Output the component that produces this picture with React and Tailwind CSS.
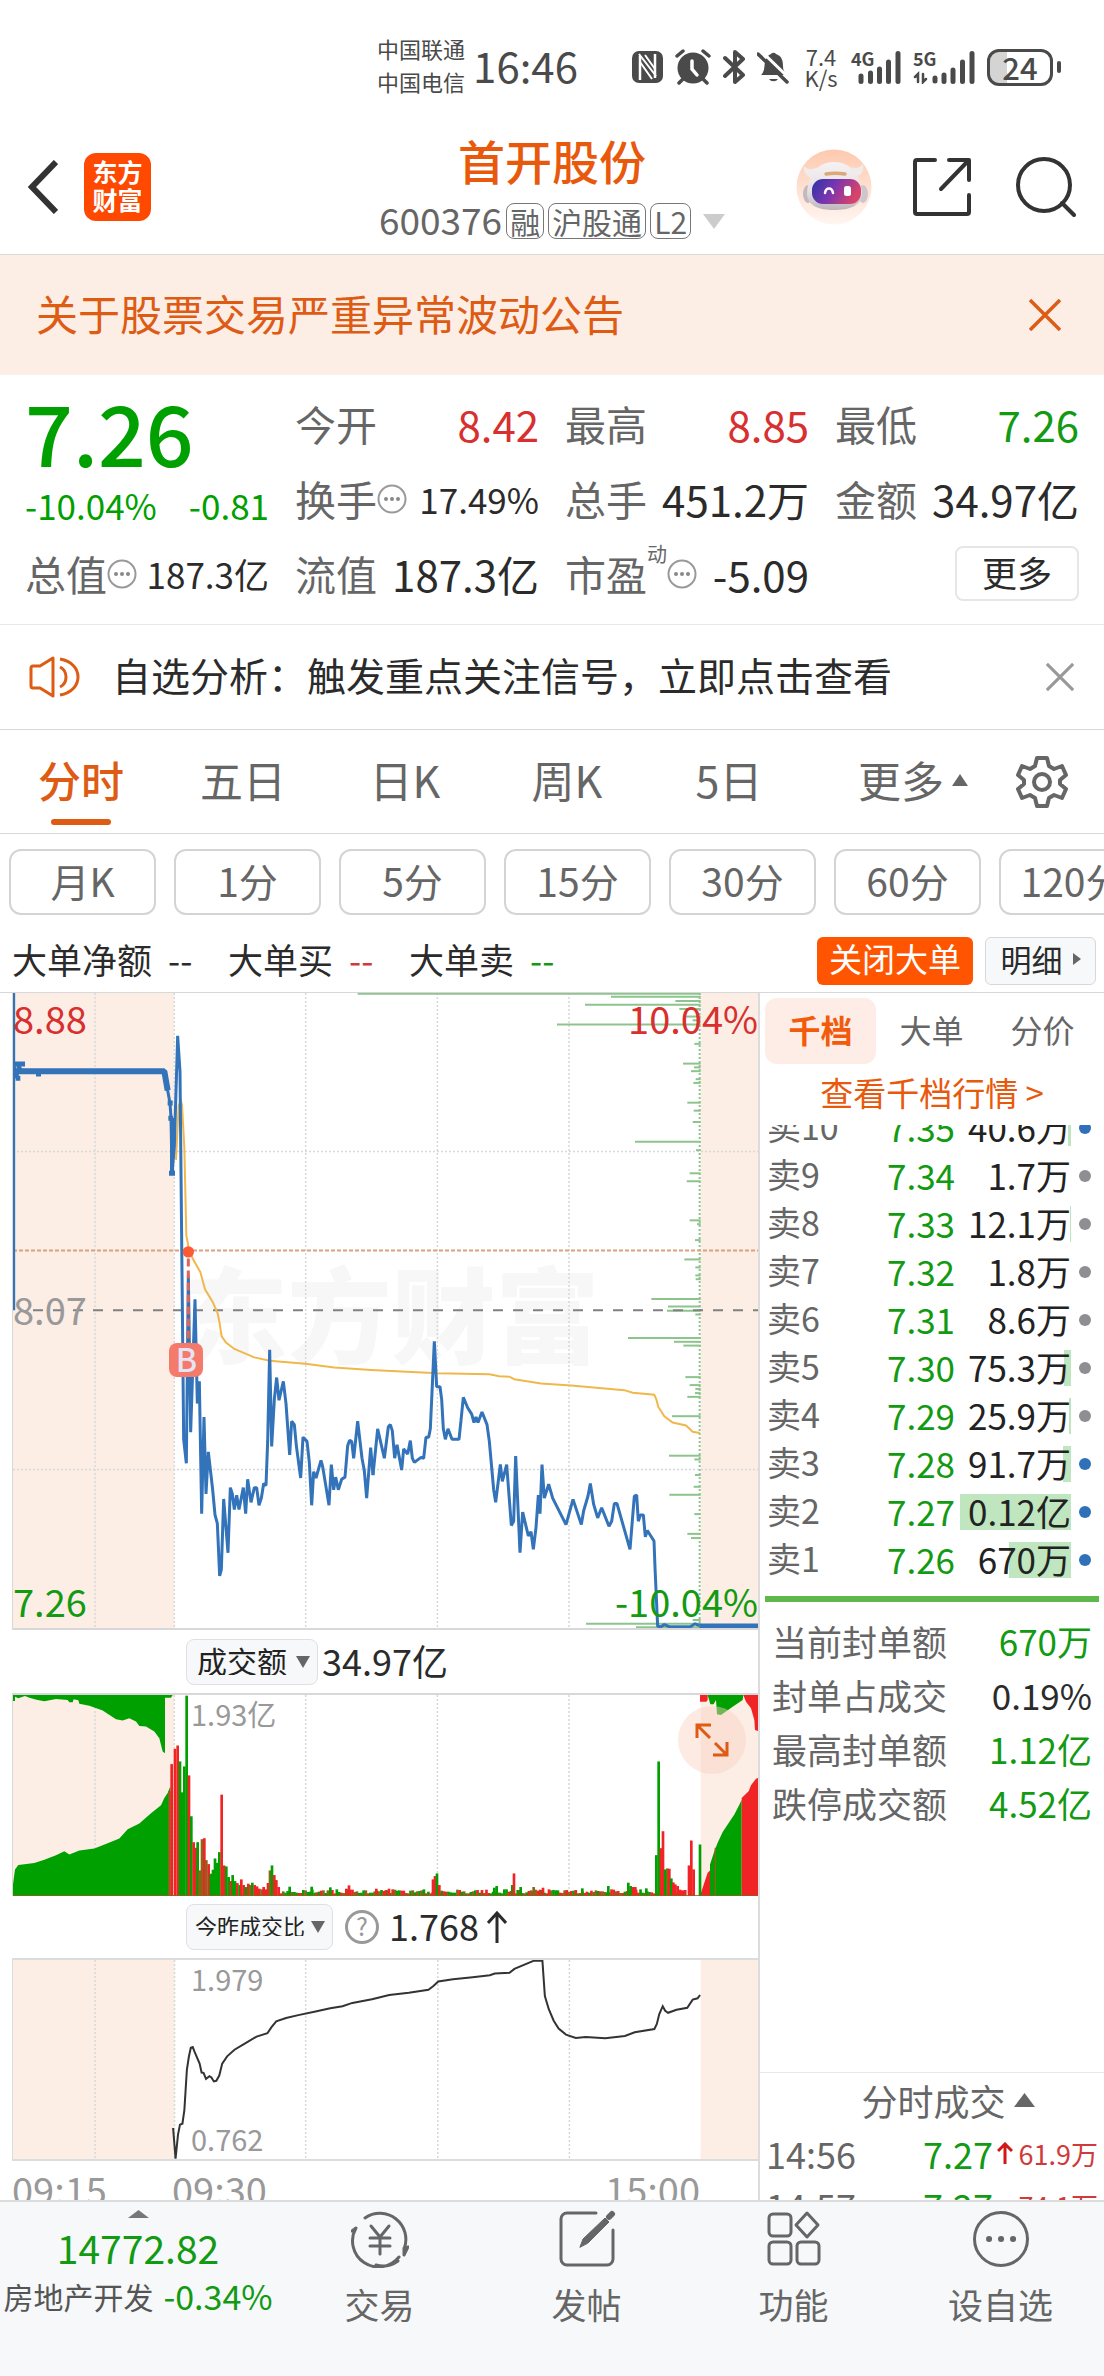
import { useState } from 'react';

const TABS = ['分时', '五日', '日K', '周K', '5日'];
const PERIODS = ['月K', '1分', '5分', '15分', '30分', '60分', '120分'];

const ASKS = [
    { level: '卖10', price: '7.35', qty: '40.6万', bar: 3, hot: true },
    { level: '卖9', price: '7.34', qty: '1.7万', bar: 0, hot: false },
    { level: '卖8', price: '7.33', qty: '12.1万', bar: 1, hot: false },
    { level: '卖7', price: '7.32', qty: '1.8万', bar: 0, hot: false },
    { level: '卖6', price: '7.31', qty: '8.6万', bar: 0, hot: false },
    { level: '卖5', price: '7.30', qty: '75.3万', bar: 7, hot: false },
    { level: '卖4', price: '7.29', qty: '25.9万', bar: 2, hot: false },
    { level: '卖3', price: '7.28', qty: '91.7万', bar: 8, hot: true },
    { level: '卖2', price: '7.27', qty: '0.12亿', bar: 111, hot: true },
    { level: '卖1', price: '7.26', qty: '670万', bar: 62, hot: true }
];

const LIMIT_STATS = [
    { label: '当前封单额', value: '670万', color: 'text-[#129a12]' },
    { label: '封单占成交', value: '0.19%', color: 'text-[#2b2b2b]' },
    { label: '最高封单额', value: '1.12亿', color: 'text-[#129a12]' },
    { label: '跌停成交额', value: '4.52亿', color: 'text-[#129a12]' }
];

const TRADES = [
    { time: '14:56', price: '7.27', qty: '61.9万', up: true },
    { time: '14:57', price: '7.27', qty: '74.1万', up: false }
];

const AUCTION = '38,788 38,33 38,202 48,236 52,202 62,219 490,219 500,265 507,295 510,330 513,462';

const PRICE =
    '513,462 520,400 530,135 537,220 548,1095 556,1152 562,705 569,1078 582,762 589,1010 595,957 602,1272 609,1042 615,1225 622,1125 635,1215 642,1275 649,1295 656,1420 661,1405 668,1237 681,1365 688,1210 694,1225 700,1262 707,1228 714,1262 727,1210 734,1272 740,1190 750,1245 760,1210 767,1210 774,1252 781,1235 788,1200 795,1205 800,1100 806,882 812,1112 820,1000 827,948 834,1002 847,957 855,1010 866,1132 872,1052 880,1060 886,1110 899,1187 906,1090 918,1100 925,1150 932,1252 938,1172 945,1187 960,1145 965,1160 984,1252 991,1155 998,1215 1004,1185 1012,1215 1022,1190 1032,1185 1040,1110 1046,1097 1052,1100 1058,1140 1070,1052 1083,1140 1090,1170 1097,1235 1109,1115 1116,1180';

const PRICE_PM =
    '6,1180 20,1070 40,1140 52,1065 58,1060 64,1075 71,1140 78,1108 92,1168 98,1118 110,1130 118,1098 124,1140 130,1150 150,1138 158,1140 165,1090 173,1090 178,1070 190,862 197,970 207,970 212,1000 217,1070 223,1095 231,1070 243,1095 264,1095 270,1050 277,995 290,1020 302,1035 309,1055 315,1042 321,1055 333,1030 348,1060 355,1100 368,1215 374,1245 388,1155 394,1195 407,1155 421,1300 428,1290 434,1135 447,1365 455,1268 472,1325 480,1315 487,1357 495,1305 502,1228 507,1272 513,1155 520,1235 533,1202 545,1235 585,1298 606,1238 631,1298 638,1265 651,1230 658,1200 668,1250 680,1282 692,1258 714,1302 722,1290 730,1248 738,1248 777,1357 790,1230 797,1228 802,1290 808,1275 817,1275 823,1327 829,1312 849,1337 852,1400 860,1540 870,1541 880,1536 895,1541 958,1541 972,1534 985,1538';

const AVG =
    '525,430 533,300 540,290 543,300 550,400 556,610 562,635 575,665 598,697 612,738 635,768 650,795 655,815 662,850 675,865 700,880 760,900 806,908 913,915 1000,924 1110,930 1310,938 1465,940 1495,945 1525,946 1540,952 1620,962 1710,967 1870,978 1895,984 1960,989 1966,1000 1972,1018 1990,1040 2015,1055 2055,1062 2075,1077 2097,1080';

// [start x, y] of each price level's turnover, all end on the 15:00 line
const LEVELS = [
    [-40, 35], [720, 42], [913, 52], [642, 61], [925, 71], [938, 89], [965, 98], [558, 108], [970, 154],
    [936, 201], [969, 210], [960, 219], [974, 238], [967, 247], [949, 294], [968, 313], [965, 340],
    [792, 387], [975, 407], [956, 462], [947, 481], [956, 574], [978, 583], [972, 621], [940, 667],
    [973, 686], [973, 705], [974, 714], [841, 761], [891, 779], [888, 789], [973, 798], [771, 854],
    [909, 863], [937, 872], [943, 947], [956, 966], [973, 975], [972, 985], [949, 994], [903, 1040],
    [894, 1134], [970, 1143], [972, 1180], [968, 1208], [895, 1227], [970, 1273], [949, 1320],
    [960, 1330], [965, 1525], [645, 1534], [795, 1542]
];

// [x, top, colour]
const VOLUME = [
    [501, 480, 'm'], [508, 398, 'r'], [518, 352, 'r'], [526, 342, 'r'], [533, 390, 'g'], [540, 483, 'g'], [546, 405, 'g'],
    [553, 192, 'g'], [560, 432, 'r'], [567, 555, 'g'], [574, 633, 'r'], [580, 650, 'r'], [586, 633, 'g'],
    [592, 718, 'm'], [599, 624, 'm'], [606, 621, 'r'], [612, 687, 'm'], [619, 699, 'r'], [625, 728, 'g'],
    [632, 716, 'g'], [638, 682, 'g'], [645, 695, 'g'], [651, 663, 'g'], [658, 490, 'r'], [665, 703, 'r'],
    [672, 706, 'g'], [679, 738, 'g'], [685, 750, 'r'], [691, 732, 'g'], [698, 750, 'g'], [705, 756, 'r'],
    [712, 762, 'g'], [717, 745, 'r'], [724, 762, 'r'], [731, 768, 'g'], [738, 758, 'r'], [744, 762, 'm'],
    [750, 755, 'g'], [757, 762, 'r'], [764, 766, 'r'], [771, 773, 'r'], [778, 775, 'm'], [784, 768, 'r'],
    [790, 775, 'r'], [797, 756, 'r'], [803, 718, 'm'], [809, 703, 'g'], [816, 732, 'r'], [822, 747, 'r'],
    [829, 768, 'r'], [862, 767, 'g'], [928, 767, 'g'], [984, 769, 'g'], [1032, 773, 'r'], [1040, 763, 'r'],
    [1122, 773, 'r'], [1160, 773, 'r'], [1292, 745, 'r'], [1298, 735, 'r'], [1304, 727, 'g'], [1311, 762, 'r'],
    [1476, 770, 'g'], [1483, 765, 'g'], [1530, 762, 'g'], [1535, 727, 'r'], [1555, 768, 'g'], [1594, 768, 'm'],
    [1622, 770, 'r'], [1740, 772, 'g'], [1818, 765, 'g'], [1878, 755, 'g'], [1885, 765, 'g'], [1892, 768, 'r'],
    [1899, 768, 'r'], [1932, 772, 'g'], [1962, 672, 'g'], [1969, 390, 'g'], [1976, 651, 'r'], [1982, 600, 'r'],
    [1989, 715, 'g'], [1995, 712, 'm'], [2001, 713, 'r'], [2007, 742, 'g'], [2013, 754, 'r'], [2019, 760, 'r'],
    [2026, 765, 'r'], [2033, 776, 'r'], [2040, 778, 'r'], [2047, 780, 'r'], [2060, 703, 'r'], [2067, 628, 'r'],
    [2074, 715, 'r'], [2093, 640, 'g']
];

// quiet minutes between the peaks
const FLAT = Array.from({ length: 182 }, (_, i) => {
    const n = (i * 37 + ((i * i) % 23) * 11) % 29;
    return [836 + i * 6.7, 787 - (n % 13), n % 5 < 2 ? 'r' : n % 5 < 4 ? 'g' : 'm'];
});

const FILL = { r: '#f02424', g: '#00a000', m: '#8a6418' };

const RATIO =
    '350,715 355,808 360,735 364,705 369,702 373,660 378,540 382,500 386,472 390,470 394,485 404,520 408,547 412,548 417,566 424,558 428,562 433,574 438,572 444,556 450,520 460,498 475,478 495,460 520,438 542,428 550,410 560,392 580,382 605,373 640,362 670,352 695,346 715,336 755,325 790,312 830,305 870,296 880,285 890,271 920,264 960,258 995,252 1005,247 1035,245 1045,233 1085,208 1102,208 1107,315 1115,355 1125,390 1135,414 1150,432 1170,442 1190,439 1230,443 1270,436 1290,425 1330,415 1335,400 1340,370 1347,346 1352,360 1358,366 1375,357 1397,351 1408,326 1418,322 1423,312';

function Triangle({ className, down }) {
    return (
        <svg viewBox="0 0 10 10" preserveAspectRatio="none" className={className} fill="currentColor" aria-hidden="true">
            <path d={down ? 'M0 0h10L5 10z' : 'M5 0l5 10H0z'} />
        </svg>
    );
}

function MoreDots({ className }) {
    return (
        <svg viewBox="0 0 30 30" className={className} fill="none" stroke="#999" strokeWidth="2" aria-hidden="true">
            <circle cx="15" cy="15" r="13.5" />
            <g fill="#888" stroke="none">
                <circle cx="9" cy="15" r="2" />
                <circle cx="15" cy="15" r="2" />
                <circle cx="21" cy="15" r="2" />
            </g>
        </svg>
    );
}

function Cross({ className }) {
    return (
        <svg viewBox="0 0 32 32" className={className} fill="none" stroke="currentColor" strokeWidth="3.5">
            <path d="M1 1l30 30M31 1L1 31" />
        </svg>
    );
}

function StatusBar() {
    return (
        <div className="flex h-[134px] items-center justify-end pr-[43px] text-[#4a4a4a]">
            <div className="pb-1 text-[22px] leading-[33px]">
                <div>中国联通</div>
                <div>中国电信</div>
            </div>
            <div className="ml-2 pb-1 text-[42px] leading-none">16:46</div>
            <svg viewBox="0 0 31 34" className="ml-[54px] h-[34px] w-[31px]">
                <rect x="0" y="1" width="31" height="32" rx="7" fill="#4a4a4a" />
                <path d="M8 6v24M23 4v24" stroke="#fff" strokeWidth="2.5" />
                <path d="M7 4l17 22M8 12l12 17M13 5l10 14" stroke="#fff" strokeWidth="2" />
            </svg>
            <svg viewBox="0 0 36 36" className="ml-3 h-9 w-9">
                <circle cx="18" cy="19" r="15.5" fill="#4a4a4a" />
                <path d="M2 7l6-5M34 7l-6-5M8 30l-4 4M28 30l4 4" stroke="#4a4a4a" strokeWidth="3.5" strokeLinecap="round" />
                <path d="M17 12v8l5 6" stroke="#fff" strokeWidth="3.5" fill="none" strokeLinecap="round" />
            </svg>
            <svg viewBox="0 0 22 36" className="ml-3 h-9 w-[22px]" fill="none" stroke="#4a4a4a" strokeWidth="4" strokeLinejoin="round" strokeLinecap="round">
                <path d="M2 9l18 17-8 7V3l8 7L2 27" />
            </svg>
            <svg viewBox="0 0 32 36" className="ml-3 h-9 w-8">
                <path d="M4 26c4-4 3-8 4-13 1-4 3-7 6-8a3 3 0 0 1 5 0c6 2 7 7 7 12 0 4 1 6 4 9z" fill="#4a4a4a" />
                <path d="M12 30h9a5 4 0 0 1-9 0z" fill="#4a4a4a" />
                <path d="M3 1l30 29" stroke="#fff" strokeWidth="3" />
                <path d="M1 5l29 28" stroke="#4a4a4a" strokeWidth="3.5" strokeLinecap="round" />
            </svg>
            <div className="ml-3.5 w-9 text-center text-[22px] leading-[21px]">
                <div>7.4</div>
                <div>K/s</div>
            </div>
            <div className="relative ml-3 h-[34px] w-[50px]">
                <span className="absolute left-0 top-0 text-[18px] font-bold leading-[16px]">4G</span>
                <svg viewBox="0 0 50 34" className="h-full w-full" fill="none" stroke="#4a4a4a" strokeWidth="5" strokeLinecap="round">
                    <path d="M10 26v5.5M19.500 23v8.500M28.500 19v12.500M37.500 12v19.500M47 3.500v28" />
                </svg>
            </div>
            <div className="relative ml-3 h-[34px] w-[62px]">
                <span className="absolute left-0 top-0 text-[18px] font-bold leading-[16px]">5G</span>
                <svg viewBox="0 0 62 34" className="h-full w-full" fill="none" stroke="#4a4a4a" strokeLinecap="round">
                    <path d="M22 28v3M31 25v6.500M40 20v11.500M49.500 12v19.500M59 3.500v28" strokeWidth="5" />
                    <path d="M2 27l3-3v8M10 24v8l3-3" strokeWidth="2.5" />
                </svg>
            </div>
            <div className="ml-3 h-[37px] w-[66px] rounded-xl border-[3px] border-[#4a4a4a] bg-linear-to-r from-[#d4d4d4] from-28% to-white to-28% text-center text-[31px] font-medium leading-[29px]">
                24
            </div>
            <div className="ml-1 h-3 w-1 rounded bg-[#4a4a4a]" />
        </div>
    );
}

function RobotIcon() {
    return (
        <svg viewBox="0 0 76 76" className="h-[76px] w-[76px]" aria-label="智能助手">
            <defs>
                <linearGradient id="halo" x1="0" y1="0" x2="0" y2="1">
                    <stop offset="0" stopColor="#fdc9ae" />
                    <stop offset="1" stopColor="#fff6f1" />
                </linearGradient>
                <linearGradient id="visor" x1="0" y1="0" x2="1" y2="0.3">
                    <stop offset="0" stopColor="#2c34a8" />
                    <stop offset="0.5" stopColor="#7a35b0" />
                    <stop offset="1" stopColor="#d8436a" />
                </linearGradient>
                <linearGradient id="shell" x1="0" y1="0" x2="0" y2="1">
                    <stop offset="0" stopColor="#f6f2f3" />
                    <stop offset="0.6" stopColor="#e6e0e3" />
                    <stop offset="1" stopColor="#bdb5ba" />
                </linearGradient>
            </defs>
            <circle cx="38" cy="38" r="37.5" fill="url(#halo)" />
            <ellipse cx="12" cy="45" rx="5" ry="9" fill="#c2b8be" />
            <ellipse cx="67" cy="45" rx="5" ry="9" fill="#cfc6cb" />
            <path d="M17 29c-6-1-10-5-9-12 3 4 8 4 14 1zM60 27c6-1 8-5 7-12-3 4-7 5-12 3z" fill="#f1ebec" />
            <path d="M38 13c16 0 27 13 28 31 0 13-13 17-28 17S11 57 11 44c1-18 11-31 27-31z" fill="url(#shell)" />
            <path d="M30 25c6-1 13-1 19 0" stroke="#dca878" strokeWidth="3.5" fill="none" strokeLinecap="round" />
            <rect x="16" y="30" width="49" height="25" rx="11" fill="url(#visor)" />
            <path d="M29 44c1-6 7-6 8 0" stroke="#fff" strokeWidth="2.5" fill="none" strokeLinecap="round" />
            <rect x="48" y="37" width="7" height="10" rx="2.5" fill="#fff" />
        </svg>
    );
}

function Header() {
    return (
        <header className="grid h-[121px] grid-cols-[1fr_auto_1fr] items-center border-b border-[#d8d8d8] pb-3.5">
            <div className="flex items-center pl-7">
                <button aria-label="返回">
                    <svg viewBox="0 0 30 54" className="h-[54px] w-[30px]" fill="none" stroke="#333" strokeWidth="6">
                        <path d="M28 2L4 27l24 25" />
                    </svg>
                </button>
                <div className="ml-[26px] flex h-[68px] w-[67px] flex-col items-center justify-center rounded-xl bg-[#ff4800] pb-1 text-[25px] font-bold leading-[28px] text-white">
                    <span>东方</span>
                    <span>财富</span>
                </div>
            </div>
            <div className="flex flex-col items-center">
                <h1 className="text-[47px] font-medium leading-[52px] text-[#e8590c]">首开股份</h1>
                <div className="mt-4 flex h-[38px] items-center gap-1 text-[37px] leading-none text-[#666]">
                    <span className="pb-1">600376</span>
                    <span className="rounded-lg border border-[#777] px-[3px] text-[30px] leading-[34px]">融</span>
                    <span className="rounded-lg border border-[#777] px-[3px] text-[30px] leading-[34px]">沪股通</span>
                    <span className="rounded-lg border border-[#777] px-[3px] text-[30px] leading-[34px]">L2</span>
                    <Triangle down className="ml-2 h-[15px] w-[22px] text-[#ccc]" />
                </div>
            </div>
            <div className="flex items-center justify-end pr-7">
                <RobotIcon />
                <button className="ml-[41px]" aria-label="分享">
                    <svg viewBox="0 0 58 58" className="h-[58px] w-[58px]" fill="none" stroke="#333" strokeWidth="4" strokeLinecap="round" strokeLinejoin="round">
                        <path d="M22 2H4a2 2 0 0 0-2 2v50a2 2 0 0 0 2 2h50a2 2 0 0 0 2-2V37M36 2h20v20M55 3L28 31" />
                    </svg>
                </button>
                <button className="ml-[45px]" aria-label="搜索">
                    <svg viewBox="0 0 60 60" className="h-[60px] w-[60px]" fill="none" stroke="#333" strokeWidth="4" strokeLinecap="round">
                        <circle cx="28" cy="28" r="26" />
                        <path d="M46 46l12 12" />
                    </svg>
                </button>
            </div>
        </header>
    );
}

function Quote({ label, value, dots, small, sup, color = 'text-[#2b2b2b]' }) {
    return (
        <div className="flex h-[75px] items-center justify-between whitespace-nowrap pb-1">
            <span className="flex items-center text-[41px] leading-none text-[#666]">
                {label}
                {sup && <sup className="mb-5 text-[20px] leading-none">{sup}</sup>}
                {dots && <MoreDots className="h-[30px] w-[30px]" />}
            </span>
            <span className={small ? `text-[35px] leading-none ${color}` : `text-[42px] leading-none ${color}`}>{value}</span>
        </div>
    );
}

function QuotePanel() {
    return (
        <section className="border-b border-[#e8e8e8] pb-[11px] pt-[13px]">
            <div className="grid grid-cols-4 gap-x-[26px] px-[25px]">
                <div className="row-span-2 flex flex-col justify-between pb-4 text-[#00a000]">
                    <div className="text-[84px] font-medium leading-[86px]">7.26</div>
                    <div className="flex justify-between text-[35px] leading-none">
                        <span>-10.04%</span>
                        <span>-0.81</span>
                    </div>
                </div>
                <Quote label="今开" value="8.42" color="text-[#d82f2f]" />
                <Quote label="最高" value="8.85" color="text-[#d82f2f]" />
                <Quote label="最低" value="7.26" color="text-[#129a12]" />
                <Quote label="换手" value="17.49%" dots small />
                <Quote label="总手" value="451.2万" />
                <Quote label="金额" value="34.97亿" />
                <Quote label="总值" value="187.3亿" dots small />
                <Quote label="流值" value="187.3亿" />
                <Quote label="市盈" value="-5.09" sup="动" dots />
                <div className="flex h-[75px] items-center justify-end pb-1">
                    <button className="h-[55px] w-[124px] rounded-lg border-2 border-[#e6e6e6] pb-1 text-[35px] leading-none text-[#2b2b2b]">
                        更多
                    </button>
                </div>
            </div>
        </section>
    );
}

function Grid({ xs, y1, y2, children }) {
    return (
        <g stroke="#d8d8d8" strokeWidth="1.5" strokeDasharray="2 2">
            {xs.map(x => (
                <path key={x} d={`M${x} ${y1}V${y2}`} vectorEffect="non-scaling-stroke" />
            ))}
            {children}
        </g>
    );
}

function PriceChart() {
    return (
        <div className="relative h-[637px] border-b-2 border-l border-[#d8d8d8] text-[38px] leading-none">
            <div className="absolute inset-0 flex items-center justify-center pl-3 text-[104px] font-black text-[#f7f7f7]">东方财富</div>
            <svg viewBox="36 33 2235 1511" preserveAspectRatio="none" className="absolute inset-0 h-full w-full" fill="none">
                <path d="M36 33H520V1544H36zM2099 33H2271V1544H2099z" fill="#fcede5" />
                <Grid xs={[282, 520, 914, 1309, 1704]} y1={33} y2={1544}>
                    <path d="M36 410H2271M36 1167H2271" vectorEffect="non-scaling-stroke" />
                </Grid>
                <g stroke="#8dc48d" strokeWidth="2">
                    {LEVELS.map(([x, y]) => (
                        <path key={y} d={`M${x + 1110} ${y}H2099`} vectorEffect="non-scaling-stroke" />
                    ))}
                    <path d="M2096 33V1544" strokeDasharray="2 2" vectorEffect="non-scaling-stroke" />
                </g>
                <path d="M36 646H2271" stroke="#d9a27e" strokeWidth="2" strokeDasharray="4 2" vectorEffect="non-scaling-stroke" />
                <path d="M96 788H2271" stroke="#808080" strokeWidth="2" strokeDasharray="10 10" vectorEffect="non-scaling-stroke" />
                <polyline points={AVG} stroke="#f0b84c" strokeWidth="2" vectorEffect="non-scaling-stroke" />
                <g stroke="#3373b9" strokeWidth="3" strokeLinejoin="bevel">
                    <polyline points={AUCTION} vectorEffect="non-scaling-stroke" />
                    <path d="M50 219H490L500 265" strokeWidth="6" vectorEffect="non-scaling-stroke" />
                    <path d="M36 202H72M44 236H58M105 226H120M500 295H515M502 331H516M504 462H522" strokeWidth="5" vectorEffect="non-scaling-stroke" />
                    <path d="M513 330V465" strokeWidth="4" vectorEffect="non-scaling-stroke" />
                    <polyline points={PRICE} vectorEffect="non-scaling-stroke" />
                    <g transform="translate(1110 0)">
                        <polyline points={PRICE_PM} vectorEffect="non-scaling-stroke" />
                        <path d="M985 1539H1161" strokeWidth="5" vectorEffect="non-scaling-stroke" />
                    </g>
                </g>
                <path d="M562 665V870" stroke="#e0645a" strokeWidth="3" strokeDasharray="8 4" vectorEffect="non-scaling-stroke" />
                <ellipse cx="562" cy="649" rx="17" ry="13.5" fill="#ff5a36" />
            </svg>
            <span className="absolute left-0 top-1.5 text-[#d82f2f]">8.88</span>
            <span className="absolute right-0 top-1.5 text-[#d82f2f]">10.04%</span>
            <span className="absolute left-0 top-[297px] text-[#999]">8.07</span>
            <span className="absolute bottom-2 left-0 text-[#129a12]">7.26</span>
            <span className="absolute bottom-2 right-0 text-[#129a12]">-10.04%</span>
            <span className="absolute left-[21%] top-[350px] h-[34px] w-[34px] rounded-lg bg-[#f47a6c] text-center text-[32px] font-medium leading-[30px] text-[#e6e3f5]">
                B
            </span>
        </div>
    );
}

function VolumeChart() {
    return (
        <div className="relative h-[203px] border-t-2 border-l border-[#d8d8d8]">
            <svg viewBox="36 190 2235 605" preserveAspectRatio="none" className="absolute inset-0 h-full w-full">
                <path d="M36 190H520V795H36zM2099 190H2271V795H2099z" fill="#fcede5" />
                <Grid xs={[282, 520, 914, 1309, 1704]} y1={190} y2={795} />
                <g fill="#00a000">
                    <path d="M36 795V760L42 715L52 702L100 696L130 686L165 672L190 660L205 670L235 658L280 652L320 636L355 622L380 594L415 577L450 546L480 522L490 500L500 485L508 465V795z" />
                    <path d="M36 190V208H42V195L52 200L72 193L85 198L110 205L130 209L165 202L200 205L205 212H215L218 203L232 206L235 216L265 222L305 237L345 263L365 267L385 260L405 270L415 283L435 285L460 300L475 320L485 360L492 365V198H510L515 190z" />
                    <path d="M2127 795V700L2140 660L2150 635L2165 602L2180 580L2200 550L2215 520L2222 505V795z" />
                    <path d="M2120 190L2128 218H2138L2145 205L2148 248L2160 250L2195 225L2225 205L2227 190z" />
                </g>
                <g fill="#f02424">
                    <path d="M2100 795V785L2110 755L2120 725L2127 718V795zM2222 795V500L2235 487L2243 480L2250 462L2265 442L2271 440V795z" />
                    <path d="M2097 190H2120V205L2116 210H2097zM2227 190L2235 210L2250 230L2260 265L2262 295L2271 298V190z" />
                </g>
                {[...FLAT, ...VOLUME].map(([x, y, c], i) => (
                    <rect key={i} x={x} y={y} width="8" height={795 - y} fill={FILL[c]} />
                ))}
                <path d="M2143 795V650" stroke={FILL.m} strokeWidth="4" />
                <path d="M36 794H2271" stroke="#8a6418" strokeWidth="3" />
            </svg>
            <span className="absolute left-[178px] top-1 text-[29px] leading-none text-[#999]">1.93亿</span>
            <button
                className="absolute right-3 top-[11px] flex h-[68px] w-[68px] items-center justify-center rounded-full bg-[#fbd3c0]/45"
                aria-label="全屏"
            >
                <svg viewBox="0 0 34 34" className="h-[34px] w-[34px]" fill="none" stroke="#de5b14" strokeWidth="3">
                    <path d="M2 15V2h14M2 2l13 13M32 19v13H18M32 32L20 20" />
                </svg>
            </button>
        </div>
    );
}

function RatioChart() {
    return (
        <div className="relative h-[203px] border-y-2 border-l border-[#dcdcdc] text-[29px] leading-none text-[#999]">
            <svg viewBox="24 206 1517 603" preserveAspectRatio="none" className="absolute inset-0 h-full w-full" fill="none">
                <path d="M24 206H353V809H24zM1424 206H1541V809H1424z" fill="#fcede5" />
                <Grid xs={[191, 353, 620, 889, 1157]} y1={206} y2={809} />
                <polyline points={RATIO} stroke="#333" strokeWidth="2" vectorEffect="non-scaling-stroke" />
            </svg>
            <span className="absolute left-[178px] top-1">1.979</span>
            <span className="absolute bottom-1.5 left-[178px]">0.762</span>
        </div>
    );
}

function Charts() {
    return (
        <div className="min-w-0 flex-1 pl-3">
            <PriceChart />
            <div className="flex h-[63px] items-center pl-[174px]">
                <div className="relative h-[46px] w-[132px]">
                    <select
                        aria-label="副图指标一"
                        className="h-full w-full appearance-none rounded-lg border border-[#e0e0e4] bg-[#f6f8fa] pb-1 pl-2.5 text-[30px] leading-none text-[#222]"
                    >
                        <option>成交额</option>
                    </select>
                    <Triangle down className="pointer-events-none absolute right-2 top-[17px] h-3 w-[14px] text-[#666]" />
                </div>
                <span className="ml-1 pb-1 text-[36px] leading-none text-[#2b2b2b]">34.97亿</span>
            </div>
            <VolumeChart />
            <div className="flex h-[62px] items-center pl-[174px]">
                <div className="relative h-[46px] w-[147px]">
                    <select
                        aria-label="副图指标二"
                        className="h-full w-full appearance-none rounded-lg border border-[#e0e0e4] bg-[#f6f8fa] pb-1 pl-2 text-[22px] leading-none text-[#222]"
                    >
                        <option>今昨成交比</option>
                    </select>
                    <Triangle down className="pointer-events-none absolute right-2 top-[17px] h-3 w-[14px] text-[#666]" />
                </div>
                <span className="ml-3 flex h-[34px] w-[34px] items-center justify-center rounded-full border-[3px] border-[#999] pb-1 text-[25px] leading-none text-[#999]">
                    ?
                </span>
                <span className="ml-2.5 pb-1 text-[36px] leading-none text-[#2b2b2b]">1.768</span>
                <svg viewBox="0 0 20 32" className="ml-2 h-8 w-5" fill="none" stroke="#2b2b2b" strokeWidth="3">
                    <path d="M10 32V2M1 12l9-10 9 10" />
                </svg>
            </div>
            <RatioChart />
            <div className="flex h-[39px] items-start overflow-hidden pt-2 text-[38px] leading-[40px] text-[#999]">
                <span className="w-[160px]">09:15</span>
                <span>09:30</span>
                <span className="ml-auto mr-[58px]">15:00</span>
            </div>
        </div>
    );
}

function OrderBook() {
    return (
        <aside className="flex w-[346px] shrink-0 flex-col border-l-2 border-[#dcdcdc]">
            <div className="mt-[5px] flex h-[66px] px-[5px] text-[32px] leading-none text-[#666]">
                <button className="w-[111px] rounded-xl bg-[#fdede6] pb-1 font-bold text-[#f25a0c]">千档</button>
                <button className="w-[111px] pb-1">大单</button>
                <button className="w-[111px] pb-1">分价</button>
            </div>
            <a href="#depth" className="mt-3 text-center text-[33px] leading-[33px] text-[#e8590c]">
                查看千档行情 &gt;
            </a>
            <div className="mt-4 flex h-[459px] flex-col justify-end overflow-hidden">
                <table className="w-full table-fixed whitespace-nowrap text-[35px] leading-none">
                    <tbody>
                        {ASKS.map(a => (
                            <tr key={a.level} className="h-12">
                                <td className="w-[100px] p-0 pb-1 pl-[7px] text-[34px] text-[#666]">{a.level}</td>
                                <td className="w-[95px] p-0 pb-1 text-right text-[#129a12]">{a.price}</td>
                                <td className="relative p-0 pb-1 text-right text-[#222]">
                                    <span className="absolute right-0 top-1.5 h-9 bg-[#bfe6bf]" style={{ width: a.bar }} />
                                    <span className="relative">{a.qty}</span>
                                </td>
                                <td className="w-[33px] p-0 pl-2">
                                    <span className={a.hot ? 'block h-3 w-3 rounded-full bg-[#3070b8]' : 'block h-3 w-3 rounded-full bg-[#8e8e93]'} />
                                </td>
                            </tr>
                        ))}
                    </tbody>
                </table>
            </div>
            <div className="mx-[5px] mt-3 h-1.5 bg-[#5eb84a]" />
            <dl className="mt-3 pl-3 pr-3 text-[35px] leading-[54px]">
                {LIMIT_STATS.map(s => (
                    <div key={s.label} className="flex justify-between">
                        <dt className="text-[#666]">{s.label}</dt>
                        <dd className={s.color}>{s.value}</dd>
                    </div>
                ))}
            </dl>
            <div className="mt-auto h-[128px] overflow-hidden border-t border-[#e8e8e8]">
                <button className="flex h-[54px] w-full items-center justify-center gap-2 pl-8 text-[36px] leading-none text-[#666]">
                    分时成交
                    <Triangle className="h-3.5 w-[21px]" />
                </button>
                <table className="w-full whitespace-nowrap text-[36px] leading-none">
                    <tbody>
                        {TRADES.map(t => (
                            <tr key={t.time} className="h-[52px]">
                                <td className="p-0 pl-1.5 text-[#666]">{t.time}</td>
                                <td className="p-0 text-right text-[#129a12]">{t.price}</td>
                                <td className="w-5 p-0">
                                    {t.up && (
                                        <svg viewBox="0 0 16 22" className="ml-1 h-[22px] w-4" fill="none" stroke="#d01818" strokeWidth="3">
                                            <path d="M8 22V2M1 9l7-7 7 7" />
                                        </svg>
                                    )}
                                </td>
                                <td className="w-[91px] p-0 pr-1.5 text-right text-[27px] text-[#d03a3a]">{t.qty}</td>
                            </tr>
                        ))}
                    </tbody>
                </table>
            </div>
        </aside>
    );
}

const NAV = [
    {
        label: '交易',
        icon: (
            <>
                <path d="M14 8A26 26 0 0 1 53 39l4-2M48 47A26 26 0 0 1 5 18l-4 3M57 37l-4 8v-7M47 51A26 26 0 0 1 25 55" />
                <path d="M20 16l9 11 9-11M19 28h20M19 36h20M29 27v17" />
            </>
        )
    },
    {
        label: '发帖',
        icon: (
            <>
                <path d="M38 3H9a6 6 0 0 0-6 6v40a6 6 0 0 0 6 6h40a6 6 0 0 0 6-6V20" />
                <path d="M22 37l3-8L47 8l4 4-21 21z" fill="#666" strokeWidth="1" />
                <path d="M51 7l3-3" strokeWidth="6" />
            </>
        )
    },
    {
        label: '功能',
        icon: (
            <>
                <rect x="4" y="4" width="22" height="22" rx="4" />
                <rect x="4" y="32" width="22" height="22" rx="4" />
                <rect x="32" y="32" width="22" height="22" rx="4" />
                <path d="M42 3l11 12-11 12-11-12z" />
            </>
        )
    },
    {
        label: '设自选',
        icon: (
            <>
                <circle cx="29" cy="29" r="26.5" />
                <path d="M17 29h.1M29 29h.1M41 29h.1" strokeWidth="6" />
            </>
        )
    }
];

function BottomNav() {
    return (
        <nav className="flex h-[176px] border-t-2 border-[#dcdcdc] bg-[#f6f8fa]">
            <button className="flex w-[276px] flex-col items-center pt-2">
                <Triangle className="h-2 w-[21px] text-[#777]" />
                <span className="mt-2.5 text-[39px] leading-[38px] text-[#129a12]">14772.82</span>
                <span className="mt-2.5 flex items-center gap-2.5 whitespace-nowrap text-[30px] leading-[40px] text-[#555]">
                    房地产开发 <span className="text-[34px] text-[#129a12]">-0.34%</span>
                </span>
            </button>
            {NAV.map(n => (
                <button key={n.label} className="flex flex-1 flex-col items-center pt-2">
                    <svg viewBox="0 0 58 58" className="h-[58px] w-[58px]" fill="none" stroke="#666" strokeWidth="3" strokeLinecap="round" strokeLinejoin="round">
                        {n.icon}
                    </svg>
                    <span className="mt-4 text-[35px] leading-[40px] text-[#666]">{n.label}</span>
                </button>
            ))}
        </nav>
    );
}

export default function App() {
    const [tab, setTab] = useState('分时');
    return (
        <div className="flex min-h-screen flex-col overflow-hidden bg-white font-['Noto_Sans_CJK_SC',sans-serif]">
            <StatusBar />
            <Header />
            <div className="flex h-[120px] items-center justify-between bg-[#fcede5] pl-9 pr-[43px] text-[#de5b14]">
                <a href="#notice" className="pb-1 text-[42px] leading-none">
                    关于股票交易严重异常波动公告
                </a>
                <button aria-label="关闭公告">
                    <Cross className="h-8 w-8" />
                </button>
            </div>
            <QuotePanel />
            <div className="flex h-[105px] items-center border-b border-[#d8d8d8] pl-[29px] pr-[30px]">
                <svg viewBox="0 0 52 42" className="h-[42px] w-[52px]" fill="none" stroke="#de5b14" strokeWidth="3" strokeLinejoin="round">
                    <path d="M2 12q0-2 2-2h7L24 2v38L11 32H4q-2 0-2-2zM31 11c8 4 8 16 0 20M31 3c24 4 24 32 0 36" />
                </svg>
                <span className="ml-[31px] pb-1.5 text-[39px] leading-none text-[#2b2b2b]">自选分析：触发重点关注信号，立即点击查看</span>
                <button className="ml-auto text-[#999]" aria-label="关闭提示">
                    <Cross className="h-7 w-7" />
                </button>
            </div>
            <div className="flex h-[104px] items-center border-b border-[#d8d8d8] text-[43px] leading-none text-[#666]">
                {TABS.map(t => (
                    <button key={t} onClick={() => setTab(t)} className="relative h-full flex-1 pb-1">
                        <span className={t === tab ? 'font-medium text-[#de5b14]' : ''}>{t}</span>
                        {t === tab && <span className="absolute bottom-2 left-1/2 -ml-[30px] h-1.5 w-[60px] rounded bg-[#de5b14]" />}
                    </button>
                ))}
                <button className="flex h-full w-[158px] items-center justify-end gap-2 pb-1">
                    更多
                    <Triangle className="h-3 w-4" />
                </button>
                <button className="ml-12 mr-9" aria-label="设置">
                    <svg viewBox="0 0 52 52" className="h-[52px] w-[52px]" fill="none" stroke="#666" strokeWidth="4" strokeLinejoin="round">
                        <path d="M21 2h10l2 8 5 3 8-3 4 9-6 5v4l6 5-4 9-8-3-5 3-2 8H21l-2-8-5-3-8 3-4-9 6-5v-4l-6-5 4-9 8 3 5-3z" />
                        <circle cx="26" cy="26" r="8" />
                    </svg>
                </button>
            </div>
            <div className="flex gap-[18px] overflow-hidden px-[9px] pb-[14px] pt-[15px]">
                {PERIODS.map(p => (
                    <button key={p} className="h-[66px] w-[147px] shrink-0 rounded-xl border-2 border-[#d4d4d4] pb-1 text-[39px] leading-none text-[#666]">
                        {p}
                    </button>
                ))}
            </div>
            <div className="flex h-[64px] items-center border-b border-[#d8d8d8] pl-3 pr-2 text-[35px] leading-none text-[#2b2b2b]">
                <span className="pb-1">大单净额</span>
                <span className="w-[76px] pb-1 pl-4">--</span>
                <span className="pb-1">大单买</span>
                <span className="w-[76px] pb-1 pl-4 text-[#d03a3a]">--</span>
                <span className="pb-1">大单卖</span>
                <span className="w-[76px] pb-1 pl-4 text-[#129a12]">--</span>
                <button className="ml-auto h-12 w-[156px] rounded-md bg-[#ff5500] pb-1 text-[33px] leading-none text-white">关闭大单</button>
                <button className="ml-3 flex h-12 w-[111px] items-center justify-center gap-2.5 rounded-md border border-[#d8d8dc] bg-[#f6f8fa] pb-1 text-[31px] leading-none">
                    明细
                    <svg viewBox="0 0 8 12" className="h-3 w-2" fill="#666">
                        <path d="M0 0l8 6-8 6z" />
                    </svg>
                </button>
            </div>
            <main className="flex flex-1">
                <Charts />
                <OrderBook />
            </main>
            <BottomNav />
        </div>
    );
}
